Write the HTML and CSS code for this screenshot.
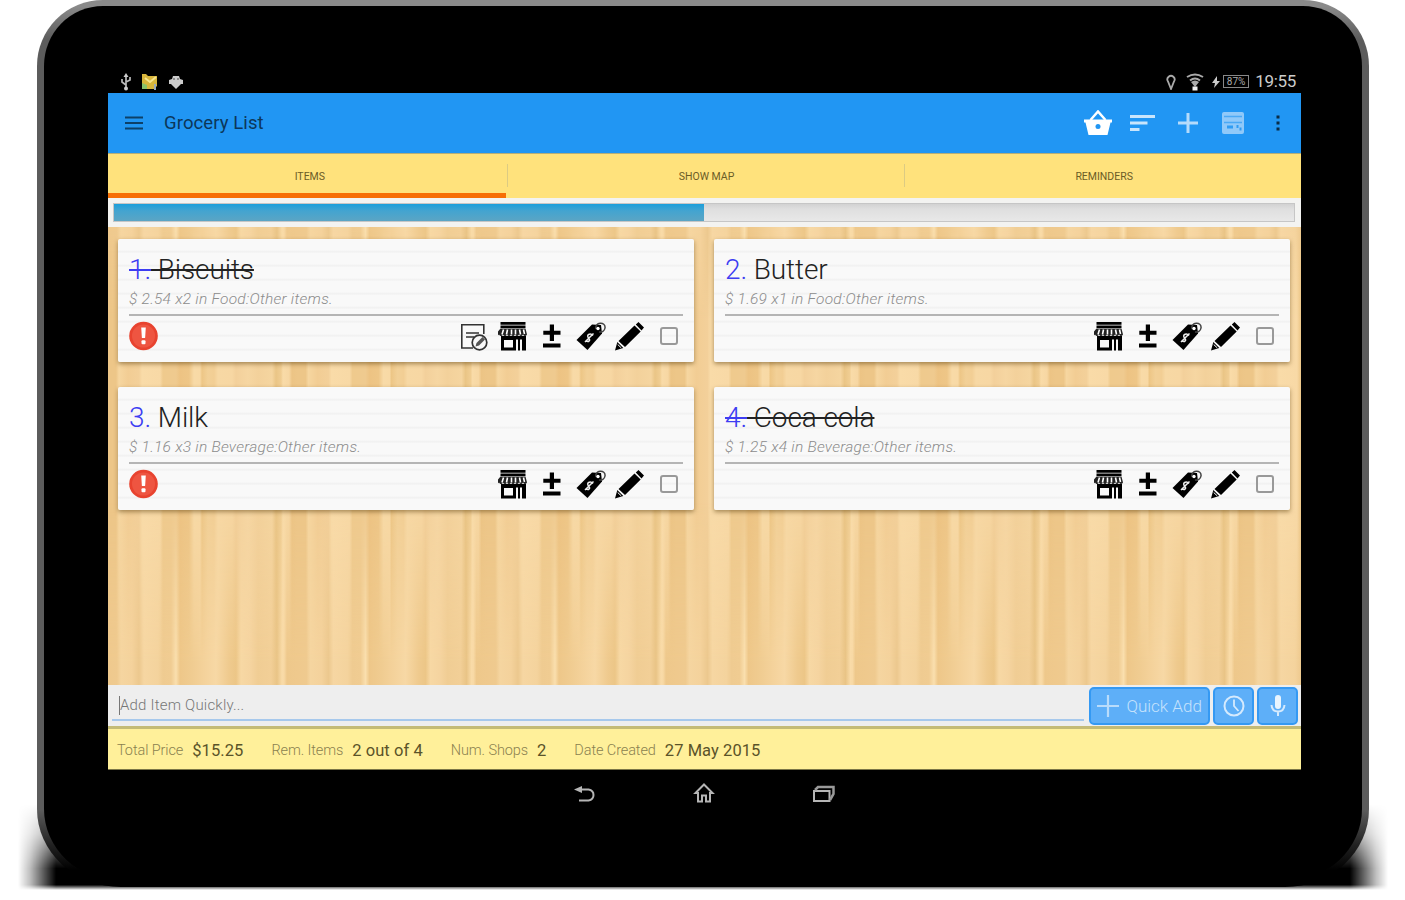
FILE: index.html
```html
<!DOCTYPE html>
<html lang="en">
<head>
    <meta charset="UTF-8">
    <meta name="viewport" content="width=device-width, initial-scale=1.0">
    <title>Grocery List</title>
    <link rel="stylesheet" href="styles.css">
</head>
<body>
    <svg class="sprite" aria-hidden="true">
        <symbol id="alert" viewBox="0 0 30 30">
            <circle cx="14.500" cy="15" r="14.3" fill="#e8432f"/>
            <circle cx="14.500" cy="15" r="11.5" fill="#ee5541"/>
            <path d="M12.2 6.5h4.6l-.7 10.5h-3.2z" fill="#fff"/>
            <rect x="12.500" y="19.2" width="4" height="4" rx="1" fill="#fff"/>
        </symbol>
        <symbol id="note" viewBox="0 0 30 30">
            <path d="M14 27H2.8V3.8h22V13M7 12h13M7 16h8" fill="none" stroke="#333" stroke-width="1.6"/>
            <circle cx="20.5" cy="21.5" r="7.3" fill="none" stroke="#333" stroke-width="1.7"/>
            <path d="M16.5 25.500l1-3.5 6-6 2.5 2.5-6 6z" fill="#555"/>
        </symbol>
        <symbol id="shop" viewBox="0 0 30 30">
            <path d="M2.500 1h25v2.700h-25zM2.500 4.500h25v2.500h-25z"/>
            <path d="M2.500 7.500h25l1.500 6q-2 3-4 0-2 3-4 0-2 3-4 0-2 3-4 0-2 3-4 0-2 3-4 0-2 3-4 0-1.500 2-3.500 0z" fill="#222"/>
            <path d="M5.500 8.500L4 13.500M9.500 8.500L8.500 13.500M13.500 8.500v5M17.500 8.500v5M21.500 8.500l1 5M25.500 8.500l1 4.500" stroke="#fff" stroke-width="1.600"/>
            <path fill-rule="evenodd" d="M3 15h25v14.500h-4V18.500h-2V29.500h-2V18.500h-2V29.500H3zM6 19v7.500h9V19z"/>
        </symbol>
        <symbol id="plusminus" viewBox="0 0 30 30">
            <path d="M12.800 3.500h4.200v6.200h6.500v4H17V20h-4.200v-6.300H6.300v-4h6.500zM6 22.500h17.500v4H6z"/>
        </symbol>
        <symbol id="tag" viewBox="0 0 30 30">
            <path d="M.5 19L16 3.500l9 .5 1 8.500L11.500 29z"/>
            <path d="M20 8c-2-7 10-8 9-1-.5 3-3 4.500-6 4" fill="none" stroke="#444" stroke-width="1.500"/>
            <circle cx="22" cy="7.500" r="1.700" fill="#fff"/>
            <path d="M17 14.500c-3-3-7-.5-4.500 2.500 2 2 .5 5-3 2.500M17.500 12.500L9 21" fill="none" stroke="#eee" stroke-width="1.500"/>
        </symbol>
        <symbol id="pencil" viewBox="0 0 30 30">
            <path d="M0 29.500l2.300-8.500 6 6zM3.500 20L19.500 4.500l6.200 6L10 26zM20.800 3.500L23.500 1 29 6.500l-2.500 3z"/>
            <path d="M2.700 23.500l3.500 3.300" stroke="#fff" stroke-width="1"/>
        </symbol>
    </svg>

    <div class="tablet">
        <div class="screen">
            <div class="status-bar">
                <div class="status-left">
                    <svg width="12" height="18" viewBox="0 0 12 18"><path d="M6 16V2M6 12L2 9V6M6 9l4-2V4" fill="none" stroke="#bbb" stroke-width="1.700"/><path d="M3.500 4L6 0l2.500 4z" fill="#ccc"/><circle cx="6" cy="15.500" r="2" fill="#ccc"/></svg>
                    <svg width="17" height="17" viewBox="0 0 17 17"><path d="M1 1h4l2 2h9v10l-3 3H1z" fill="#d8b63c"/><path d="M1 10l5 2v4H1z" fill="#8ac36a"/><path d="M4 5l5 4 6-5" fill="none" stroke="#f6e48d" stroke-width="2"/><path d="M14 11v6" stroke="#9ab" stroke-width="2"/></svg>
                    <svg width="16" height="16" viewBox="0 0 16 16"><path d="M1 6l3-1 1-3h6l1 3 3 1v4h-2l-3 3-2 2-2-2-3-3H1z" fill="#ccc"/><circle cx="6" cy="5" r="1" fill="#777"/><circle cx="10" cy="5" r="1" fill="#777"/></svg>
                </div>
                <div class="status-right">
                    <svg class="pin" width="10" height="16" viewBox="0 0 10 16"><path d="M5 15L2 7.500a3.600 3.600 0 1 1 6 0z" fill="none" stroke="#aaa" stroke-width="1.800"/></svg>
                    <svg class="wifi" width="18" height="18" viewBox="0 0 18 18"><path d="M1 4q8-5 16 0M4 7.500q5-4 10 0" fill="none" stroke="#aaa" stroke-width="2"/><path d="M5 9q4-3 8 0l-4 5z" fill="#aaa"/><rect x="6.500" y="13.500" width="5" height="4" fill="#eee"/></svg>
                    <svg width="8" height="12" viewBox="0 0 8 12"><path d="M5 0L0 7h3l-1 5 6-7H5z" fill="#ccc"/></svg>
                    <span class="battery">87%</span>
                    <span class="clock">19:55</span>
                </div>
            </div>

            <header class="app-bar">
                <svg class="menu" width="18" height="14" viewBox="0 0 18 14"><path d="M0 1.500h18M0 7h18M0 12.500h18" stroke="#0d4068" stroke-width="2.200"/></svg>
                <h1>Grocery List</h1>
                <div class="actions">
                    <svg width="30" height="26" viewBox="0 0 30 26"><path d="M1 9.500h28v3h-1.500L24.500 25h-19L2.500 12.500H1z" fill="#fff"/><path d="M7.500 10L15 1.500l7.500 8.500" fill="none" stroke="#fff" stroke-width="2.500"/><circle cx="15" cy="16.500" r="2.500" fill="#2196f3"/></svg>
                    <svg width="26" height="18" viewBox="0 0 26 18"><path d="M1 2.500h25M1 9h17.500M1 15.500h9.500" stroke="#c9e5fc" stroke-width="3"/></svg>
                    <svg width="20" height="20" viewBox="0 0 20 20"><path d="M0 10h20M10 0v20" stroke="#b5dbfb" stroke-width="3"/></svg>
                    <svg width="24" height="24" viewBox="0 0 24 24"><rect x="1" y="1" width="22" height="22" rx="2" fill="#90c9f9"/><path d="M3 5.500h18M3 11.500h18" stroke="#4aa9f5" stroke-width="1.300"/><path d="M6 14.500h6v3H6zM15.500 14h2v3h-2zM18.500 16.500h2v3h-2z" fill="#2f9cf3"/></svg>
                    <svg width="4" height="16" viewBox="0 0 4 16"><path d="M.5.500h3v3h-3zM.5 6.500h3v3h-3zM.5 12.500h3v3h-3z" fill="#0a2b45"/></svg>
                </div>
            </header>

            <nav class="tabs">
                <div class="tab active"><span>ITEMS</span></div>
                <div class="tab"><span>SHOW MAP</span></div>
                <div class="tab"><span>REMINDERS</span></div>
            </nav>

            <div class="progress-row">
                <div class="progress"><div class="progress-fill" style="width: 50%"></div></div>
            </div>

            <main class="items">
                <div class="card done">
                    <h2><span>1.</span> Biscuits</h2>
                    <p>$ 2.54 x2 in Food:Other items.</p>
                    <div class="card-tools">
                        <svg class="alert"><use href="#alert"/></svg>
                        <svg><use href="#note"/></svg>
                        <svg><use href="#shop"/></svg>
                        <svg><use href="#plusminus"/></svg>
                        <svg><use href="#tag"/></svg>
                        <svg><use href="#pencil"/></svg>
                        <i class="check"></i>
                    </div>
                </div>
                <div class="card">
                    <h2><span>2.</span> Butter</h2>
                    <p>$ 1.69 x1 in Food:Other items.</p>
                    <div class="card-tools">
                        <svg><use href="#shop"/></svg>
                        <svg><use href="#plusminus"/></svg>
                        <svg><use href="#tag"/></svg>
                        <svg><use href="#pencil"/></svg>
                        <i class="check"></i>
                    </div>
                </div>
                <div class="card">
                    <h2><span>3.</span> Milk</h2>
                    <p>$ 1.16 x3 in Beverage:Other items.</p>
                    <div class="card-tools">
                        <svg class="alert"><use href="#alert"/></svg>
                        <svg><use href="#shop"/></svg>
                        <svg><use href="#plusminus"/></svg>
                        <svg><use href="#tag"/></svg>
                        <svg><use href="#pencil"/></svg>
                        <i class="check"></i>
                    </div>
                </div>
                <div class="card done">
                    <h2><span>4.</span> Coca cola</h2>
                    <p>$ 1.25 x4 in Beverage:Other items.</p>
                    <div class="card-tools">
                        <svg><use href="#shop"/></svg>
                        <svg><use href="#plusminus"/></svg>
                        <svg><use href="#tag"/></svg>
                        <svg><use href="#pencil"/></svg>
                        <i class="check"></i>
                    </div>
                </div>
            </main>

            <div class="quick-add">
                <div class="field"><span>Add Item Quickly...</span></div>
                <div class="btn btn-add">
                    <svg width="22" height="22" viewBox="0 0 22 22"><path d="M0 11h22M11 0v22" stroke="#b9dcfb" stroke-width="2.200"/></svg>
                    <span>Quick Add</span>
                </div>
                <div class="btn">
                    <svg width="22" height="22" viewBox="0 0 22 22"><circle cx="11" cy="11" r="9.500" fill="none" stroke="#d5eafd" stroke-width="2"/><path d="M11 4.500V11l4.500 5" fill="none" stroke="#d5eafd" stroke-width="1.800"/></svg>
                </div>
                <div class="btn">
                    <svg width="16" height="22" viewBox="0 0 16 22"><rect x="5" y="0" width="6" height="14" rx="3" fill="#e8f4fe"/><path d="M1.500 10q.5 6.500 6.500 6.500t6.500-6.500M8 16v5" fill="none" stroke="#d5eafd" stroke-width="2"/></svg>
                </div>
            </div>

            <footer class="summary">
                <span class="label">Total Price</span><b>$15.25</b>
                <span class="label">Rem. Items</span><b>2 out of 4</b>
                <span class="label">Num. Shops</span><b>2</b>
                <span class="label">Date Created</span><b>27 May 2015</b>
            </footer>

            <div class="nav-bar">
                <svg width="22" height="18" viewBox="0 0 22 18"><path d="M5 4.500h9.500q5 1 5 5.500t-5 5.500H5" fill="none" stroke="#b5b5b5" stroke-width="2"/><path d="M0 4.500L8 1v7z" fill="#b5b5b5"/></svg>
                <svg width="22" height="21" viewBox="0 0 22 21"><path d="M11 1.500l8.500 8.500H17v8.500h-4v-6H9v6H5V10H2.500z" fill="none" stroke="#b5b5b5" stroke-width="2"/></svg>
                <svg width="24" height="18" viewBox="0 0 24 18"><path d="M2 6h15.500v10H2z" fill="none" stroke="#b5b5b5" stroke-width="2"/><path d="M3 5l3-3h15.500v7l-3.500 6" fill="none" stroke="#999" stroke-width="2.500"/></svg>
            </div>
        </div>
    </div>
</body>
</html>
```
FILE: styles.css
```css
* {
    box-sizing: border-box;
}
body {
    margin: 0;
    width: 1405px;
    height: 900px;
    overflow: hidden;
    background-color: #fff;
    font-family: Roboto, "Open Sans", sans-serif;
    color: #222;
}
.sprite {
    display: none;
}
svg {
    flex: none;
}
.tablet {
    position: relative;
    width: 1332px;
    height: 887px;
    margin-left: 37px;
    padding: 64px 63px 0 64px;
    border: 6px solid transparent;
    border-left-width: 7px;
    border-right-width: 7px;
    border-radius: 66px 66px 84px 84px / 66px 66px 78px 78px;
    background:
        linear-gradient(#000, #000) padding-box,
        linear-gradient(#8a8a8a 0, #8a8a8a 6px, #5c5c5c 40px, #5c5c5c 810px, #222 845px, #000 870px) border-box;
}
/* floor shadow under the device */
.tablet::before {
    content: "";
    position: absolute;
    z-index: -1;
    left: -26px;
    right: -26px;
    bottom: -9px;
    height: 86px;
    background: linear-gradient(90deg, transparent, rgba(0, 0, 0, 0.25) 12px, #000 38px, #000 calc(100% - 38px), rgba(0, 0, 0, 0.25) calc(100% - 12px), transparent);
    -webkit-mask-image: linear-gradient(transparent, rgba(0, 0, 0, 0.35) 35%, #000 75%, #000 94%, transparent);
    mask-image: linear-gradient(transparent, rgba(0, 0, 0, 0.35) 35%, #000 75%, #000 94%, transparent);
}
.screen {
    display: flex;
    flex-direction: column;
    width: 1193px;
}
.status-bar {
    display: flex;
    justify-content: space-between;
    height: 23px;
    padding: 0 5px 0 12px;
    color: #ccc;
}
.status-left,
.status-right {
    display: flex;
    align-items: center;
}
.status-left {
    gap: 10px;
}
.status-left svg:first-child {
    margin-right: -1px;
}
.pin {
    margin-right: 10px;
}
.wifi {
    margin-right: 8px;
}
.battery {
    width: 26px;
    height: 13px;
    margin: 0 6px 0 3px;
    border: 1px solid #888;
    font-size: 10px;
    line-height: 11px;
    text-align: center;
    color: #aaa;
}
.clock {
    font-size: 17px;
    line-height: 23px;
    letter-spacing: -0.3px;
}
.app-bar {
    display: flex;
    align-items: center;
    height: 60px;
    padding: 0 21px 0 17px;
    background-color: #2196f3;
}
.app-bar h1 {
    margin: 0 0 0 21px;
    font-size: 18.5px;
    font-weight: 400;
    letter-spacing: 0.1px;
    color: #0c3759;
}
.actions {
    display: flex;
    align-items: center;
    margin-left: auto;
}
.actions svg:nth-child(2) {
    margin-left: 16px;
}
.actions svg:nth-child(3) {
    margin-left: 23px;
}
.actions svg:nth-child(4) {
    margin-left: 23px;
}
.actions svg:nth-child(5) {
    margin-left: 31px;
}
.tabs {
    display: grid;
    grid-template-columns: repeat(3, 1fr);
    height: 45px;
    background-color: #ffe27c;
    border-top: 1px solid #b5ae79;
}
.tab {
    position: relative;
    display: flex;
    align-items: center;
    justify-content: center;
    padding-left: 4px;
    font-size: 10.5px;
    color: #6b5c26;
}
.tab + .tab::before {
    content: "";
    position: absolute;
    left: 1px;
    top: 10px;
    width: 1px;
    height: 23px;
    background-color: #dccb83;
}
.tab.active {
    padding: 5px 0 0 6px;
    border-bottom: 5px solid #f76e05;
}
.progress-row {
    height: 29px;
    padding: 5px 6px 0 5px;
    background-color: #f3f3f1;
}
.progress {
    height: 19px;
    background: linear-gradient(#d2d2d2, #dfdfdf 30%, #e8e8e8);
    border: 1px solid #c6c6c6;
}
.progress-fill {
    height: 17px;
    background: linear-gradient(#1b9fdb, #43a4d0 40%, #5ba5c4);
}
.items {
    position: relative;
    z-index: 0;
    display: grid;
    grid-template-columns: 576px 576px;
    grid-auto-rows: 123px;
    gap: 25px 20px;
    height: 458px;
    padding: 12px 10px;
    background: repeating-linear-gradient(90deg,
        #edc688 0, #edc688 8px, #f6d6a0 11px, #f2cd94 20px, #f3d09a 31px,
        #f9dba8 34px, #f8d9a6 52px, #efca8d 55px, #efca8f 68px, #edc383 72px,
        #eec687 81px, #f8daa7 86px, #f8d9a5 92px, #edc686 94px, #f2d097 100px,
        #f2ce94 106px, #f7d8a4 110px, #f7d7a3 124px, #f3d09b 128px, #f6d6a2 140px,
        #f3d19b 150px, #f5d5a0 164px, #eac586 168px, #f0cd92 173px, #f9dba8 175px,
        #f7d7a3 181px, #ecc485 184px, #edc688 189.5px);
}
/* second grain, takes over towards the bottom */
.items::before {
    content: "";
    position: absolute;
    z-index: -1;
    inset: 0;
    background: repeating-linear-gradient(90deg,
        #efc98d 0, #efca8f 9px, #f5d5a0 13px, #f4d29c 24px, #ecc88e 31px,
        #f6d6a2 36px, #f4d39d 50px, #efcb91 55px, #f0cc92 63px, #fadfae 68px,
        #eec789 72px, #f0cc91 84px, #f4d29b 96px, #f7d8a5 108px, #efca8e 121px,
        #ecc687 128px, #f7d8a4 133px, #f5d4a0 142px, #f0cd94 150px, #f2cf97 163px,
        #e9c486 169px, #f9dba8 174px, #f8d9a5 176px, #eec88b 179px, #efc98d 189.5px);
    -webkit-mask-image: linear-gradient(#000, transparent 20%, transparent 60%, #000 95%);
    mask-image: linear-gradient(#000, transparent 20%, transparent 60%, #000 95%);
}
.card {
    padding: 15px 11px 0;
    border-radius: 2px;
    background: repeating-linear-gradient(#f9f9f9 0, #f9f9f9 11px, #f0f0f0 13px, #f9f9f9 14px);
    box-shadow: 0 2px 4px rgba(90, 60, 10, 0.5);
}
.card h2 {
    width: max-content;
    margin: 0;
    font-size: 28px;
    line-height: 32px;
    font-weight: 300;
    letter-spacing: -0.1px;
    color: #222;
}
.card h2 span {
    color: #3d3df2;
}
.card.done h2,
.card.done h2 span {
    text-decoration: line-through;
    text-decoration-thickness: 2px;
}
.card p {
    height: 30px;
    margin: 0;
    padding-top: 4px;
    border-bottom: 2px solid #b5b5b5;
    font-size: 15.5px;
    line-height: 19px;
    font-style: italic;
    font-weight: 300;
    letter-spacing: 0.25px;
    color: #8c8c8c;
}
.card-tools {
    display: flex;
    align-items: center;
    justify-content: flex-end;
    gap: 9px;
    height: 40px;
    padding-right: 5px;
}
.card-tools svg {
    width: 30px;
    height: 30px;
}
.card-tools .alert {
    margin-right: auto;
}
.check {
    width: 18px;
    height: 18px;
    margin-left: 6px;
    border: 2px solid #999;
    border-radius: 3px;
}
.quick-add {
    display: flex;
    height: 41px;
    padding: 2px 3px 1px 4px;
    background-color: #eee;
}
.field {
    width: 973px;
    height: 34px;
    margin-right: 5px;
    padding: 9px 0 0 7px;
    border-bottom: 2px solid #a6c8ec;
    font-size: 15px;
    font-weight: 300;
    line-height: 19px;
    letter-spacing: 0.2px;
    color: #777;
}
.field span {
    display: inline-block;
    border-left: 1px solid #777;
}
.btn {
    display: flex;
    align-items: center;
    justify-content: center;
    width: 41px;
    height: 38px;
    margin-left: 3px;
    background-color: #5eaff8;
    border: 2px solid #3499f3;
    border-radius: 5px;
}
.btn-add {
    width: 121px;
    margin-left: 0;
    gap: 7px;
    font-size: 17px;
    font-weight: 300;
    color: #c5e2fc;
}
.summary {
    display: flex;
    align-items: center;
    height: 44px;
    padding: 2px 9px 0;
    background-color: #fff09a;
    border-top: 3px solid #c4bb76;
    border-bottom: 1px solid #7b7647;
}
.label {
    margin-right: 9px;
    font-size: 14.5px;
    font-weight: 300;
    letter-spacing: -0.1px;
    color: #8a8150;
}
.summary b {
    margin-right: 28px;
    font-size: 16.5px;
    font-weight: 400;
    letter-spacing: 0.07px;
    color: #5a5329;
}
.nav-bar {
    display: flex;
    align-items: center;
    justify-content: center;
    gap: 97px;
    height: 47px;
}
```
